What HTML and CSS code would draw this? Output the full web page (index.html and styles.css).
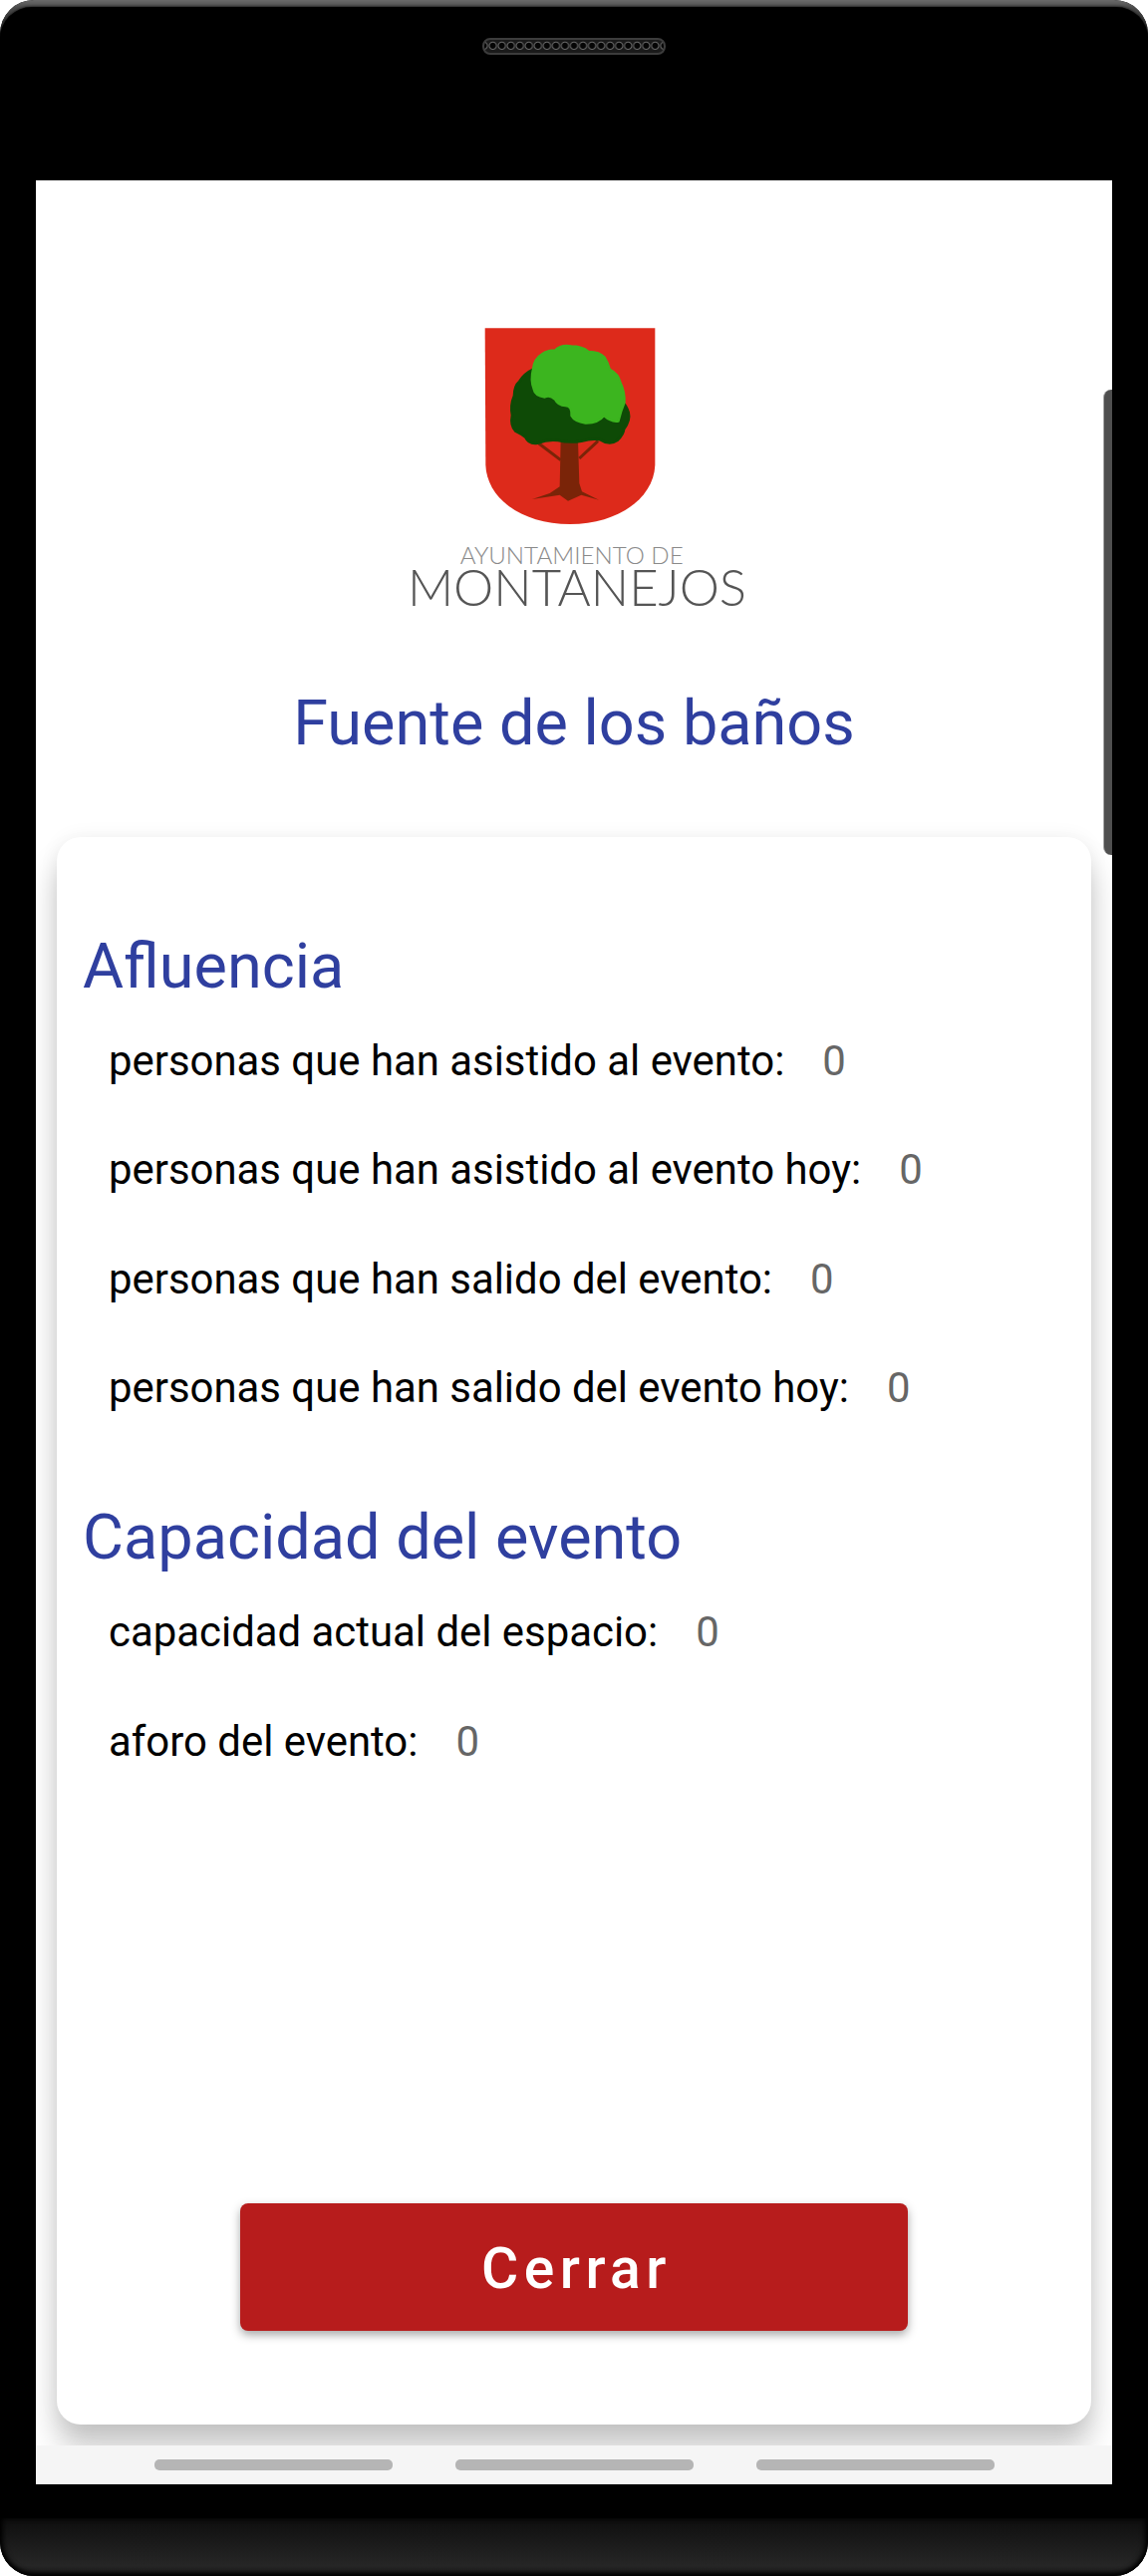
FILE: index.html
```html
<!DOCTYPE html>
<html lang="es">
<head>
<meta charset="utf-8">
<title>Fuente de los baños</title>
<link rel="stylesheet" href="styles.css">
</head>
<body>
<div class="phone">
  <div class="bezel-top">
    <div class="bezel-inner">
      <div class="speaker"></div>
    </div>
  </div>
  <div class="side-button"></div>
  <div class="screen">
    <main class="content">
      <header class="hero">
        <svg class="logo" viewBox="0 0 1200 960" role="img" aria-label="Ayuntamiento de Montanejos">
          <path fill="#dd2a1b" d="M320 58H832V470C828 570 720 648 576 648C430 648 326 570 322 470Z"/>
          <path fill="none" stroke="#7a2408" stroke-width="9" d="M548 455L482 405M604 450L660 398"/>
          <path fill="#7a2408" d="M548 395H600L604 525L612 550L663 575L610 560L570 578L545 560L462 573L515 555L545 535Z"/>
          <path fill="#0e4a06" stroke="#0e4a06" stroke-width="8" stroke-linejoin="round" d="M465 182Q438 195 424 218Q408 232 408 262Q396 290 402 320Q396 350 412 368Q432 378 442 386Q452 408 478 404Q510 392 540 396Q575 404 610 398Q645 388 668 394Q695 412 718 396Q738 376 738 362Q758 335 752 312Q746 292 735 282L600 200Z"/>
          <path fill="#3cb51f" stroke="#3cb51f" stroke-width="6" stroke-linejoin="round" d="M465 178Q468 150 492 135Q512 122 530 125Q550 106 580 112Q612 112 632 128Q665 128 680 145Q692 165 696 182Q722 195 728 222Q742 250 740 282Q730 305 722 338Q700 342 678 322Q660 345 622 344Q590 340 580 322Q582 292 562 292Q540 292 530 272Q515 258 500 266Q470 262 466 240Q456 215 465 178Z"/>
          <text class="logo-small" x="581" y="768" text-anchor="middle" textLength="672" lengthAdjust="spacingAndGlyphs">AYUNTAMIENTO DE</text>
          <text class="logo-big" x="597" y="895" text-anchor="middle" textLength="1020" lengthAdjust="spacingAndGlyphs">MONTANEJOS</text>
        </svg>
        <h1 class="title">Fuente de los baños</h1>
      </header>
      <section class="card">
        <div class="stats">
          <h2 class="heading">Afluencia</h2>
          <div class="row"><span>personas que han asistido al evento:</span><span class="value">0</span></div>
          <div class="row"><span>personas que han asistido al evento hoy:</span><span class="value">0</span></div>
          <div class="row"><span>personas que han salido del evento:</span><span class="value">0</span></div>
          <div class="row"><span>personas que han salido del evento hoy:</span><span class="value">0</span></div>
          <h2 class="heading heading-second">Capacidad del evento</h2>
          <div class="row"><span>capacidad actual del espacio:</span><span class="value">0</span></div>
          <div class="row"><span>aforo del evento:</span><span class="value">0</span></div>
        </div>
        <button class="close" type="button">Cerrar</button>
      </section>
    </main>
    <nav class="navbar">
      <span class="pill"></span><span class="pill"></span><span class="pill"></span>
    </nav>
  </div>
  <div class="bezel-gap"></div>
  <div class="bezel-bottom"></div>
</div>
</body>
</html>
```
FILE: styles.css
```css
* { box-sizing: border-box; }
html, body { margin: 0; padding: 0; background: #fff; }
body { font-family: Roboto, "Liberation Sans", sans-serif; }
.phone {
  position: relative;
  width: 1152px;
  height: 2585px;
  display: flex;
  flex-direction: column;
  background: #000;
  border-radius: 34px;
  overflow: hidden;
}
.bezel-top {
  height: 181px;
  flex: none;
  display: flex;
  padding-top: 7px;
  background: linear-gradient(#6a6a6a, #4a4a4a 8px, #333 24px, #000 46px);
}
.bezel-inner {
  flex: 1;
  display: flex;
  justify-content: center;
  align-items: flex-start;
  padding-top: 31px;
  background: #000;
  border-radius: 32px 32px 0 0;
  box-shadow: 0 0 3px #000;
}
.speaker {
  width: 184px;
  height: 17px;
  border-radius: 8px;
  border: 2px solid #3c3c3c;
  background: #151515 radial-gradient(circle at 50% 45%, #050505 0 2.6px, #6a6a6a 3.6px, #1a1a1a 4.6px) repeat-x center / 9.05px 100%;
}
.side-button {
  position: absolute;
  left: 1107px;
  top: 391px;
  width: 9px;
  height: 467px;
  background: #4f4f4f;
  border-left: 1px solid #aaa;
  border-radius: 8px 0 0 8px;
}
.screen {
  flex: none;
  height: 2312px;
  margin: 0 36px;
  background: #fff;
  display: flex;
  flex-direction: column;
}
.content {
  flex: 1;
  min-height: 0;
  overflow: hidden;
  display: flex;
  flex-direction: column;
}
.hero {
  height: 659px;
  flex: none;
  display: flex;
  flex-direction: column;
  align-items: center;
}
.logo {
  width: 400px;
  height: 320px;
  margin-top: 129px;
  margin-left: 8px;
  flex: none;
}
.logo-small { font-family: Lato, sans-serif; font-weight: 300; font-size: 72px; fill: #8a8a8a; }
.logo-big { font-family: Lato, sans-serif; font-weight: 300; font-size: 153px; fill: #555; }
.title {
  margin: 60px 0 0;
  font-size: 63px;
  line-height: 72px;
  font-weight: 400;
  color: #2f3f9f;
}
.card {
  flex: none;
  height: 1593px;
  margin: 0 21px;
  padding: 94px 26px 0;
  background: #fff;
  border-radius: 24px;
  box-shadow: 0 24px 30px rgba(0, 0, 0, .22), 0 0 20px rgba(0, 0, 0, .06);
  display: flex;
  flex-direction: column;
  align-items: center;
}
.stats { width: 100%; flex: 1; }
.heading {
  margin: 0 0 4px;
  font-size: 63px;
  line-height: 72px;
  font-weight: 400;
  color: #2f3f9f;
}
.heading-second { margin-top: 60px; }
.row {
  display: flex;
  gap: 38px;
  padding-left: 26px;
  height: 109.3px;
  align-items: center;
  font-size: 41.9px;
  color: #000;
}
.value { color: #666; }
.close {
  width: 670px;
  height: 128px;
  margin-bottom: 94px;
  padding: 3px 0 0 5px;
  flex: none;
  border: 0;
  border-radius: 8px;
  background: #b71c1c;
  color: #fff;
  font-family: inherit;
  font-size: 57px;
  font-weight: 500;
  letter-spacing: 5.5px;
  box-shadow: 0 4px 10px rgba(0, 0, 0, .35);
}
.navbar {
  flex: none;
  height: 39px;
  background: #f5f5f5;
  display: flex;
  justify-content: center;
  align-items: center;
  gap: 63px;
  position: relative;
}
.pill {
  width: 239px;
  height: 11px;
  border-radius: 5px;
  background: #b5b5b5;
}
.bezel-gap { flex: 1; background: #000; }
.bezel-bottom {
  height: 58px;
  flex: none;
  border-radius: 0 0 34px 34px;
  background: linear-gradient(#0e0e0e, #262626 82%, #1c1c1c);
  box-shadow: inset 0 -3px 5px #000, inset 4px 0 6px -2px #000, inset -4px 0 6px -2px #000;
}
```
